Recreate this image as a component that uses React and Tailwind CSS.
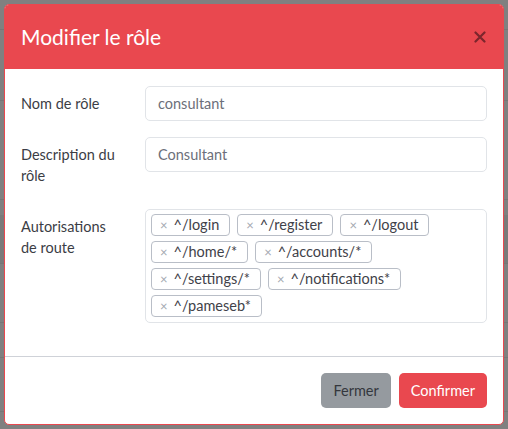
import React from "react";

const tags = [
  "^/login",
  "^/register",
  "^/logout",
  "^/home/*",
  "^/accounts/*",
  "^/settings/*",
  "^/notifications*",
  "^/pameseb*",
];

function Tag({ label }) {
  return (
    <span className="flex h-[22px] items-center rounded-[4px] border border-[#b9bec7] bg-white pl-[8px] pr-[10px] text-[14.5px] leading-[20px] text-[#3f4249]">
      <span className="mr-[6px] text-[13px] text-[#a3a8b0]">×</span>
      {label}
    </span>
  );
}

function FieldRow({ label, children }) {
  return (
    <div className="mb-4 flex">
      <label className="w-[94px] shrink-0 py-[7px] text-[14.5px] leading-[21px] text-[#3b3d45]">
        {label}
      </label>
      <div className="ml-[30px] flex-1">{children}</div>
    </div>
  );
}

export default function App() {
  return (
    <div
      className="relative h-[429px] w-[508px] overflow-hidden bg-[#808080]"
      style={{ fontFamily: "Lato, 'Noto Sans', sans-serif" }}
    >
      {/* dimmed table behind the modal */}
      <div className="flex flex-col">
        <div className="h-[30px] border-b border-[#767676]" />
        <div className="h-[71px] border-b border-[#767676]" />
        <div className="h-[99px] border-b border-[#767676]" />
        <div className="h-[15px]" />
        <div className="h-[49px] border-b border-[#767676] bg-[#7a7a7a]" />
        <div className="h-[59px] border-b border-[#767676]" />
        <div className="h-[35px] border-b border-[#767676]" />
        <div className="h-[54px] border-b border-[#767676]" />
      </div>

      {/* modal */}
      <div className="absolute left-[4px] top-[4px] flex w-[500px] flex-col overflow-hidden rounded-[5px] border border-[#e9484f] bg-white">
        <div className="flex h-[64px] items-center justify-between bg-[#e9484f] px-4">
          <h5 className="text-[21px] leading-[30px] text-white">Modifier le rôle</h5>
          <svg width="12" height="12" viewBox="0 0 12 12" className="mr-[1px]">
            <path d="M1.5 1.5 L10.5 10.5 M10.5 1.5 L1.5 10.5" stroke="#7c262c" strokeWidth="2.2" strokeLinecap="round" />
          </svg>
        </div>

        <div className="px-4 pt-[17px] pb-[17px]">
          <FieldRow label="Nom de rôle">
            <div className="flex h-[35px] items-center rounded-[5px] border border-[#e1e4e8] px-3 text-[14.5px] text-[#6c6f7a]">
              consultant
            </div>
          </FieldRow>
          <FieldRow label="Description du rôle">
            <div className="flex h-[35px] items-center rounded-[5px] border border-[#e1e4e8] px-3 text-[14.5px] text-[#6c6f7a]">
              Consultant
            </div>
          </FieldRow>
          <FieldRow label="Autorisations de route">
            <div className="flex min-h-[114px] flex-wrap content-start gap-x-[7px] gap-y-[5px] rounded-[5px] border border-[#e1e4e8] pt-[4px] pb-[5px] pl-[5px] pr-[18px]">
              {tags.map((t) => (
                <Tag key={t} label={t} />
              ))}
            </div>
          </FieldRow>
        </div>

        <div className="flex justify-end gap-2 border-t border-[#cfd2d8] px-4 py-4">
          <button className="h-[35px] rounded-[5px] bg-[#959a9f] px-3 text-[14.5px] text-[#34373d]">
            Fermer
          </button>
          <button className="h-[35px] rounded-[5px] bg-[#e9484f] px-3 text-[14.5px] text-white">
            Confirmer
          </button>
        </div>
      </div>
    </div>
  );
}
